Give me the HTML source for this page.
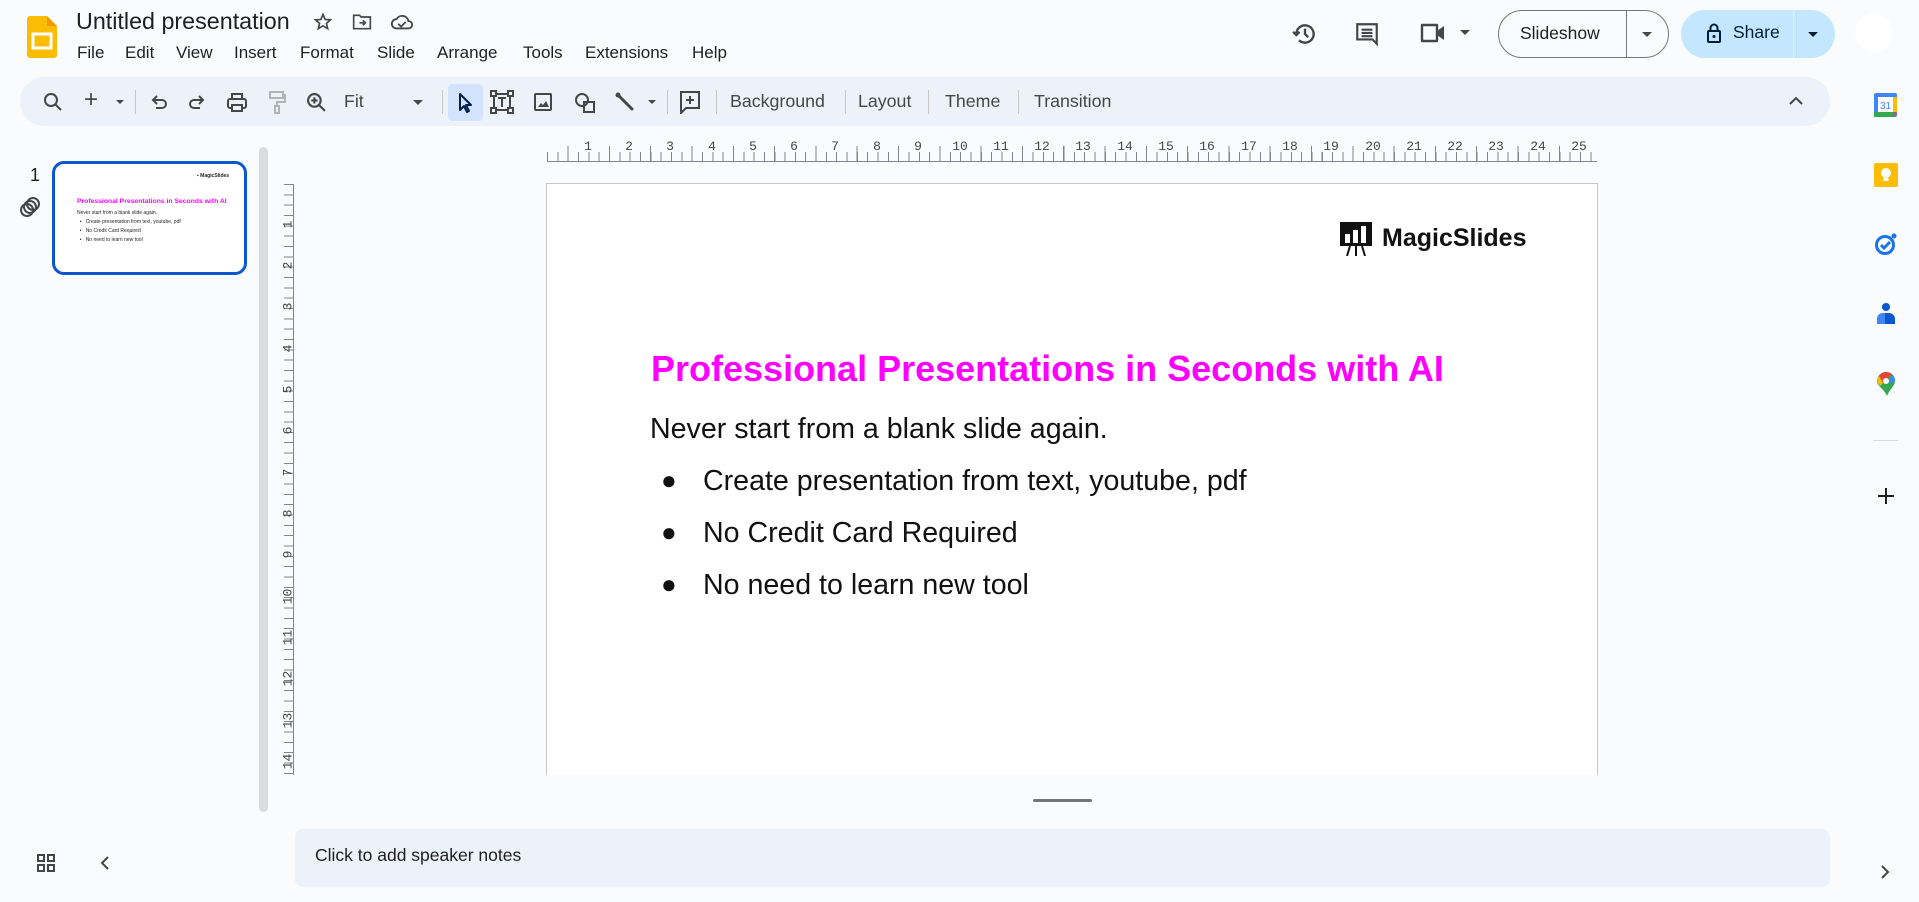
<!DOCTYPE html>
<html><head><meta charset="utf-8"><style>
*{margin:0;padding:0;box-sizing:border-box}
body{width:1919px;height:902px;background:#f9fbfd;font-family:"Liberation Sans",Arial,sans-serif;color:#1f1f1f;position:relative;overflow:hidden}
.a{position:absolute}
.menu span{position:absolute;top:43px;font-size:17px;color:#1f1f1f}
.tb{position:absolute;left:20px;top:77px;width:1810px;height:49px;background:#edf2fa;border-radius:25px}
.tt{position:absolute;top:91px;font-size:17.8px;color:#444746}
.dv{position:absolute;top:90px;width:1px;height:24px;background:#c7c7c7}
.ic{position:absolute}
.hn{position:absolute;top:139px;font:13px "Liberation Mono",monospace;color:#444746;width:20px;text-align:center}
.vn{position:absolute;left:278px;font:13px "Liberation Mono",monospace;color:#444746;transform:rotate(-90deg);width:20px;text-align:center}
.sl{font-family:"Liberation Sans",Arial,sans-serif}
</style></head><body>

<svg class="a" style="left:27px;top:16px" width="30" height="42" viewBox="0 0 30 42"><path d="M3 0h17l10 10v29a3 3 0 0 1-3 3H3a3 3 0 0 1-3-3V3a3 3 0 0 1 3-3z" fill="#fbbc04"/><path d="M20 0l10 10h-8a2 2 0 0 1-2-2z" fill="#f29900"/><rect x="6" y="18" width="18" height="14" fill="none" stroke="#fff" stroke-width="3"/></svg>
<div class="a" style="left:76px;top:8px;font-size:23.3px;color:#1f1f1f">Untitled presentation</div>
<svg class="a" style="left:313px;top:12px" width="20" height="20" viewBox="0 0 24 24"><path d="M12 3l2.6 6 6.4.5-4.9 4.2 1.5 6.3L12 16.6 6.4 20l1.5-6.3L3 9.5l6.4-.5z" fill="none" stroke="#444746" stroke-width="2"/></svg>
<svg class="a" style="left:352px;top:13px" width="20" height="18" viewBox="0 0 24 20"><path d="M2 2h7l2 2h11v14H2z" fill="none" stroke="#444746" stroke-width="2"/><path d="M9 11h7m-3-3l3 3-3 3" fill="none" stroke="#444746" stroke-width="2"/></svg>
<svg class="a" style="left:390px;top:13px" width="24" height="18" viewBox="0 0 26 18"><path d="M7 16a5 5 0 0 1 0-10 7 7 0 0 1 13 2 4 4 0 0 1 0 8z" fill="none" stroke="#444746" stroke-width="2"/><path d="M9 11l3 3 5-5" fill="none" stroke="#444746" stroke-width="2"/></svg>
<div class="menu"><span style="left:77px">File</span><span style="left:125px">Edit</span><span style="left:176px">View</span><span style="left:234px">Insert</span><span style="left:300px">Format</span><span style="left:377px">Slide</span><span style="left:437px">Arrange</span><span style="left:523px">Tools</span><span style="left:585px">Extensions</span><span style="left:692px">Help</span></div>

<svg class="a" style="left:1292px;top:21px" width="26" height="26" viewBox="0 0 24 24"><path d="M4 12a8 8 0 1 1 2.5 5.8" fill="none" stroke="#444746" stroke-width="2.2"/><path d="M1 10l3 3 3-3" fill="none" stroke="#444746" stroke-width="2.2"/><path d="M12 7v5l3 3" fill="none" stroke="#444746" stroke-width="2.2"/></svg>
<svg class="a" style="left:1354px;top:21px" width="26" height="26" viewBox="0 0 24 24"><path d="M3 3h18v14h-0v4l-4-4H3z" fill="none" stroke="#444746" stroke-width="2"/><path d="M7 8h10M7 11h10M7 14h10" stroke="#444746" stroke-width="2"/></svg>
<svg class="a" style="left:1420px;top:22px" width="28" height="22" viewBox="0 0 28 22"><path d="M2 3h15v16H2z" fill="none" stroke="#444746" stroke-width="2.4" stroke-linejoin="round"/><path d="M17 9l7-5v14l-7-5z" fill="#444746"/></svg>
<div class="a" style="left:1460px;top:30px;border:5px solid transparent;border-top-color:#444746;border-bottom:0"></div>
<div class="a" style="left:1498px;top:10px;width:171px;height:48px;border:1.3px solid #747775;border-radius:24px"></div>
<div class="a" style="left:1626px;top:11px;width:1px;height:46px;background:#747775"></div>
<div class="a" style="left:1520px;top:23px;font-size:17.5px;color:#1f1f1f">Slideshow</div>
<div class="a" style="left:1642px;top:32px;border:5px solid transparent;border-top-color:#444746;border-bottom:0"></div>
<div class="a" style="left:1681px;top:10px;width:154px;height:48px;background:#c2e7ff;border-radius:24px"></div>
<div class="a" style="left:1793px;top:10px;width:1px;height:48px;background:#e8f4fc"></div>
<svg class="a" style="left:1706px;top:22px" width="16" height="22" viewBox="0 0 16 22"><rect x="2" y="9" width="12" height="11" rx="1" fill="none" stroke="#001d35" stroke-width="2"/><path d="M4.5 9V6a3.5 3.5 0 0 1 7 0v3" fill="none" stroke="#001d35" stroke-width="2"/><circle cx="8" cy="14.5" r="1.5" fill="#001d35"/></svg>
<div class="a" style="left:1733px;top:22px;font-size:17.5px;color:#001d35">Share</div>
<div class="a" style="left:1808px;top:32px;border:5px solid transparent;border-top-color:#001d35;border-bottom:0"></div>
<div class="a" style="left:1855px;top:14px;width:38px;height:38px;border-radius:50%;background:#fff"></div>

<div class="tb"></div>
<svg class="ic" style="left:43px;top:92px" width="20" height="20" viewBox="0 0 20 20"><circle cx="8" cy="8" r="6" fill="none" stroke="#444746" stroke-width="2"/><path d="M12.5 12.5L18 18" stroke="#444746" stroke-width="2"/></svg>
<div class="a" style="left:84px;top:86px;font-size:24px;color:#444746">+</div>
<div class="a" style="left:116px;top:100px;border:4px solid transparent;border-top-color:#444746;border-bottom:0"></div>
<div class="dv" style="left:135px"></div>
<svg class="ic" style="left:150px;top:93px" width="18" height="18" viewBox="0 0 18 18"><path d="M4 7h8a4 4 0 0 1 0 8H6" fill="none" stroke="#444746" stroke-width="2"/><path d="M7 3L3 7l4 4" fill="none" stroke="#444746" stroke-width="2"/></svg>
<svg class="ic" style="left:188px;top:93px" width="18" height="18" viewBox="0 0 18 18"><path d="M14 7H6a4 4 0 0 0 0 8h6" fill="none" stroke="#444746" stroke-width="2"/><path d="M11 3l4 4-4 4" fill="none" stroke="#444746" stroke-width="2"/></svg>
<svg class="ic" style="left:226px;top:91px" width="22" height="22" viewBox="0 0 22 22"><path d="M6 3h10v5H6z" fill="none" stroke="#444746" stroke-width="2"/><rect x="2" y="8" width="18" height="9" rx="2" fill="none" stroke="#444746" stroke-width="2"/><path d="M6 14h10v6H6z" fill="#edf2fa" stroke="#444746" stroke-width="2"/></svg>
<svg class="ic" style="left:268px;top:90px" width="18" height="24" viewBox="0 0 18 24"><rect x="2" y="2" width="13" height="6" fill="none" stroke="#b0b3b8" stroke-width="2"/><path d="M15 5h2v7H9v4" fill="none" stroke="#b0b3b8" stroke-width="2"/><rect x="7" y="16" width="4" height="7" fill="none" stroke="#b0b3b8" stroke-width="2"/></svg>
<svg class="ic" style="left:306px;top:92px" width="21" height="21" viewBox="0 0 20 20"><circle cx="8" cy="8" r="6" fill="none" stroke="#444746" stroke-width="2"/><path d="M12.5 12.5L18 18M8 5v6M5 8h6" stroke="#444746" stroke-width="2"/></svg>
<div class="tt" style="left:344px">Fit</div>
<div class="a" style="left:413px;top:100px;border:5px solid transparent;border-top-color:#444746;border-bottom:0"></div>
<div class="dv" style="left:442px"></div>
<div class="a" style="left:448px;top:84px;width:35px;height:37px;background:#d3e3fd;border-radius:4px"></div>
<svg class="ic" style="left:457px;top:92px" width="16" height="22" viewBox="0 0 16 22"><path d="M3 2v16l4-4 3 6 2-1-3-6h5z" fill="none" stroke="#041e49" stroke-width="2" stroke-linejoin="round"/></svg>
<svg class="ic" style="left:490px;top:89px" width="24" height="26" viewBox="0 0 24 26"><rect x="4" y="5" width="16" height="16" fill="none" stroke="#444746" stroke-width="2"/><rect x="1" y="2" width="5" height="5" fill="#edf2fa" stroke="#444746" stroke-width="2"/><rect x="18" y="2" width="5" height="5" fill="#edf2fa" stroke="#444746" stroke-width="2"/><rect x="1" y="19" width="5" height="5" fill="#edf2fa" stroke="#444746" stroke-width="2"/><rect x="18" y="19" width="5" height="5" fill="#edf2fa" stroke="#444746" stroke-width="2"/><path d="M8 9h8M12 9v9" stroke="#444746" stroke-width="2"/></svg>
<svg class="ic" style="left:534px;top:93px" width="18" height="18" viewBox="0 0 18 18"><rect x="1" y="1" width="16" height="16" rx="1" fill="none" stroke="#444746" stroke-width="2"/><path d="M4 14l3-4 2 2 3-4 3 6z" fill="#444746"/></svg>
<svg class="ic" style="left:574px;top:92px" width="22" height="22" viewBox="0 0 22 22"><circle cx="8" cy="8" r="6" fill="none" stroke="#444746" stroke-width="2"/><path d="M10 10h10v10H10z" fill="none" stroke="#444746" stroke-width="2"/></svg>
<svg class="ic" style="left:615px;top:92px" width="22" height="22" viewBox="0 0 22 22"><path d="M3 3l14 14" stroke="#444746" stroke-width="3" stroke-linecap="round"/><circle cx="3" cy="3" r="2.5" fill="#444746"/></svg>
<div class="a" style="left:648px;top:100px;border:4px solid transparent;border-top-color:#444746;border-bottom:0"></div>
<div class="dv" style="left:667px"></div>
<svg class="ic" style="left:679px;top:90px" width="22" height="24" viewBox="0 0 22 24"><path d="M2 2h18v16H7l-5 5z" fill="none" stroke="#444746" stroke-width="2"/><path d="M11 6v8M7 10h8" stroke="#444746" stroke-width="2"/></svg>
<div class="dv" style="left:716px"></div>
<div class="tt" style="left:730px">Background</div>
<div class="dv" style="left:845px"></div>
<div class="tt" style="left:858px">Layout</div>
<div class="dv" style="left:928px"></div>
<div class="tt" style="left:945px">Theme</div>
<div class="dv" style="left:1018px"></div>
<div class="tt" style="left:1034px">Transition</div>
<svg class="ic" style="left:1788px;top:96px" width="16" height="10" viewBox="0 0 16 10"><path d="M2 8l6-6 6 6" fill="none" stroke="#444746" stroke-width="2"/></svg>

<div class="a" style="left:30px;top:165px;font-size:18px;color:#1f1f1f">1</div>
<svg class="a" style="left:18px;top:196px" width="24" height="22" viewBox="0 0 24 22"><circle cx="9" cy="14" r="6" fill="none" stroke="#444746" stroke-width="2"/><circle cx="12" cy="11" r="6" fill="none" stroke="#444746" stroke-width="2"/><circle cx="15" cy="8" r="6" fill="none" stroke="#444746" stroke-width="2"/></svg>
<div class="a" style="left:52px;top:161px;width:195px;height:114px;border:3px solid #0b57d0;border-radius:12px;background:#fff;overflow:hidden">
 <div class="a" style="left:142px;top:9px;font-size:5px;font-weight:bold">▪ MagicSlides</div>
 <div class="a" style="left:22px;top:34px;font-size:6.8px;font-weight:bold;color:#ff00ff;white-space:nowrap">Professional Presentations in Seconds with AI</div>
 <div class="a" style="left:22px;top:45px;font-size:5px;line-height:9px;white-space:nowrap">Never start from a blank slide again.<br>&nbsp;&nbsp;•&nbsp;&nbsp;&nbsp;Create presentation from text, youtube, pdf<br>&nbsp;&nbsp;•&nbsp;&nbsp;&nbsp;No Credit Card Required<br>&nbsp;&nbsp;•&nbsp;&nbsp;&nbsp;No need to learn new tool</div>
</div>
<div class="a" style="left:259px;top:147px;width:9px;height:665px;background:#dadce0;border-radius:5px"></div>

<div class="a" style="left:547px;top:152px;width:1050px;height:10px;background:repeating-linear-gradient(90deg,#80868b 0 1px,transparent 1px 10.33px)"></div>
<div class="a" style="left:547px;top:146px;width:1050px;height:16px;background:repeating-linear-gradient(90deg,transparent 0 20.65px,#80868b 20.65px 21.65px,transparent 21.65px 41.3px)"></div>
<div class="a" style="left:547px;top:161px;width:1050px;height:1px;background:#80868b"></div>
<div class="a" style="left:284px;top:184px;width:10px;height:591px;background:repeating-linear-gradient(180deg,#80868b 0 1px,transparent 1px 10.33px)"></div>
<div class="a" style="left:293px;top:184px;width:1px;height:591px;background:#80868b"></div>
<span class="hn" style="left:578px">1</span><span class="hn" style="left:619px">2</span><span class="hn" style="left:660px">3</span><span class="hn" style="left:702px">4</span><span class="hn" style="left:743px">5</span><span class="hn" style="left:784px">6</span><span class="hn" style="left:825px">7</span><span class="hn" style="left:867px">8</span><span class="hn" style="left:908px">9</span><span class="hn" style="left:950px">10</span><span class="hn" style="left:991px">11</span><span class="hn" style="left:1032px">12</span><span class="hn" style="left:1073px">13</span><span class="hn" style="left:1115px">14</span><span class="hn" style="left:1156px">15</span><span class="hn" style="left:1197px">16</span><span class="hn" style="left:1239px">17</span><span class="hn" style="left:1280px">18</span><span class="hn" style="left:1321px">19</span><span class="hn" style="left:1363px">20</span><span class="hn" style="left:1404px">21</span><span class="hn" style="left:1445px">22</span><span class="hn" style="left:1486px">23</span><span class="hn" style="left:1528px">24</span><span class="hn" style="left:1569px">25</span>
<span class="vn" style="top:217px">1</span><span class="vn" style="top:258px">2</span><span class="vn" style="top:299px">3</span><span class="vn" style="top:341px">4</span><span class="vn" style="top:382px">5</span><span class="vn" style="top:423px">6</span><span class="vn" style="top:465px">7</span><span class="vn" style="top:506px">8</span><span class="vn" style="top:547px">9</span><span class="vn" style="top:589px">10</span><span class="vn" style="top:630px">11</span><span class="vn" style="top:671px">12</span><span class="vn" style="top:713px">13</span><span class="vn" style="top:754px">14</span>

<div class="a sl" style="left:546px;top:183px;width:1052px;height:592px;background:#fff;border:1px solid #c7c7c7;border-bottom:0">
 <svg class="a" style="left:793px;top:38px" width="32" height="34" viewBox="0 0 32 34"><rect x="0" y="0" width="32" height="24" fill="#111"/><rect x="5" y="12" width="5" height="9" fill="#fff"/><rect x="13" y="8" width="5" height="13" fill="#fff"/><rect x="21" y="4" width="5" height="17" fill="#fff"/><path d="M10 24l-3 10M16 24v10M22 24l3 10" stroke="#111" stroke-width="2"/></svg>
 <div class="a" style="left:835px;top:40px;font-size:25px;font-weight:bold;color:#111">MagicSlides</div>
 <div class="a" style="left:104px;top:164px;font-size:36px;font-weight:bold;color:#ff00ff;white-space:nowrap">Professional Presentations in Seconds with AI</div>
 <div class="a" style="left:103px;top:229px;font-size:28.6px;color:#111;white-space:nowrap">Never start from a blank slide again.</div>
 <div class="a" style="left:114px;top:281px;font-size:26px;color:#111">●</div>
 <div class="a" style="left:156px;top:281px;font-size:28.6px;color:#111;white-space:nowrap">Create presentation from text, youtube, pdf</div>
 <div class="a" style="left:114px;top:333px;font-size:26px;color:#111">●</div>
 <div class="a" style="left:156px;top:333px;font-size:28.6px;color:#111;white-space:nowrap">No Credit Card Required</div>
 <div class="a" style="left:114px;top:385px;font-size:26px;color:#111">●</div>
 <div class="a" style="left:156px;top:385px;font-size:28.6px;color:#111;white-space:nowrap">No need to learn new tool</div>
</div>

<div class="a" style="left:1033px;top:799px;width:59px;height:3px;background:#747775;border-radius:2px"></div>
<div class="a" style="left:295px;top:829px;width:1535px;height:58px;background:#edf2fa;border-radius:8px"></div>
<div class="a" style="left:315px;top:845px;font-size:17.5px;color:#1f1f1f">Click to add speaker notes</div>
<svg class="a" style="left:37px;top:854px" width="18" height="18" viewBox="0 0 18 18"><g fill="none" stroke="#444746" stroke-width="2"><rect x="1" y="1" width="6" height="6"/><rect x="11" y="1" width="6" height="6"/><rect x="1" y="11" width="6" height="6"/><rect x="11" y="11" width="6" height="6"/></g></svg>
<svg class="a" style="left:100px;top:855px" width="10" height="16" viewBox="0 0 10 16"><path d="M8 2L2 8l6 6" fill="none" stroke="#444746" stroke-width="2"/></svg>

<svg class="a" style="left:1874px;top:93px" width="23" height="24" viewBox="0 0 23 24"><rect x="0" y="0" width="23" height="24" rx="2" fill="#4285f4"/><rect x="4" y="4" width="15" height="15" fill="#fff"/><rect x="0" y="19" width="19" height="5" fill="#34a853"/><rect x="19" y="4" width="4" height="15" fill="#fbbc04"/><path d="M19 19h4l-4 5z" fill="#ea4335"/><text x="11.5" y="16" font-size="10" text-anchor="middle" fill="#4285f4" font-family="Liberation Sans">31</text></svg>
<svg class="a" style="left:1874px;top:163px" width="24" height="24" viewBox="0 0 24 24"><rect width="24" height="24" rx="2" fill="#fbbc04"/><circle cx="12" cy="10" r="5" fill="#fff"/><rect x="9.5" y="15" width="5" height="3" fill="#fff"/></svg>
<svg class="a" style="left:1874px;top:232px" width="24" height="24" viewBox="0 0 24 24"><circle cx="11" cy="13" r="8.5" fill="none" stroke="#1a73e8" stroke-width="3"/><path d="M7 13l3 3 6-6" fill="none" stroke="#1a73e8" stroke-width="3"/><circle cx="20" cy="4" r="2.5" fill="#1a73e8"/></svg>
<svg class="a" style="left:1876px;top:302px" width="20" height="24" viewBox="0 0 20 24"><circle cx="10" cy="5" r="4" fill="#0b57d0"/><path d="M1 22v-5a6 6 0 0 1 6-6h6a6 6 0 0 1 6 6v5z" fill="#0b57d0"/><path d="M1 22v-5a6 6 0 0 1 6-6h2v11z" fill="#4285f4"/></svg>
<svg class="a" style="left:1877px;top:372px" width="18" height="24" viewBox="0 0 18 24"><path d="M9 0a9 9 0 0 1 9 9c0 5-6 9-8 15-2-6-10-10-10-15a9 9 0 0 1 9-9z" fill="#34a853"/><path d="M2 4a9 9 0 0 1 13-2L6 11z" fill="#ea4335"/><path d="M0 9a9 9 0 0 1 2-5l4 7-3 3z" fill="#fbbc04"/><path d="M15 2a9 9 0 0 1 3 7l-7 3z" fill="#4285f4"/><circle cx="9" cy="9" r="3" fill="#fff"/></svg>
<div class="a" style="left:1873px;top:440px;width:25px;height:1px;background:#dadce0"></div>
<svg class="a" style="left:1877px;top:487px" width="18" height="18" viewBox="0 0 18 18"><path d="M9 1v16M1 9h16" stroke="#1f1f1f" stroke-width="2"/></svg>
<svg class="a" style="left:1880px;top:864px" width="10" height="16" viewBox="0 0 10 16"><path d="M2 2l6 6-6 6" fill="none" stroke="#444746" stroke-width="2"/></svg>
</body></html>
